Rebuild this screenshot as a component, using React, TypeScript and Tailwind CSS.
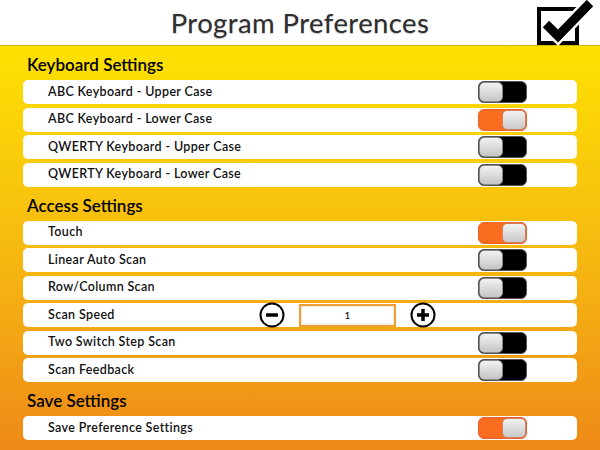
import React from "react";

const font = { fontFamily: '"Lato", "Open Sans", sans-serif' };

function Toggle({ on }: { on: boolean }) {
  return on ? (
    <div className="flex h-[22px] w-[49px] justify-end rounded-[6px] border border-[#e9622a] bg-[#fa6c1e]">
      <div className="h-[20px] w-[24px] rounded-[5px] border border-[#d08060] bg-gradient-to-b from-[#f2f2f2] to-[#c9c9c9]" />
    </div>
  ) : (
    <div className="flex h-[22px] w-[49px] justify-start rounded-[6px] border-[1.5px] border-[#555] bg-black">
      <div className="h-full w-[24px] rounded-[5px] border border-[#888] bg-gradient-to-b from-[#f2f2f2] to-[#c5c5c5]" />
    </div>
  );
}

function RoundBtn({ plus }: { plus?: boolean }) {
  return (
    <svg width="26" height="26" viewBox="0 0 26 26">
      <circle cx="13" cy="13" r="11.5" fill="white" stroke="black" strokeWidth="2" />
      <path d="M7 13 H19" stroke="black" strokeWidth="3.5" />
      {plus && <path d="M13 7 V19" stroke="black" strokeWidth="3.5" />}
    </svg>
  );
}

function Row({ label, on }: { label: string; on?: boolean }) {
  return (
    <div className="flex h-[24px] items-center justify-between rounded-[5px] bg-white pl-[25px] pr-[50px]">
      <span className="text-[12.5px] font-semibold tracking-[0.35px] text-[#111]">{label}</span>
      <Toggle on={!!on} />
    </div>
  );
}

function Heading({ title }: { title: string }) {
  return (
    <div className="flex h-[34px] items-end px-[4px] pb-[5px]">
      <h2 className="text-[17px] leading-[20px] font-semibold text-black">{title}</h2>
    </div>
  );
}

export default function App() {
  return (
    <div className="flex h-[450px] w-[600px] flex-col overflow-hidden" style={font}>
      <header className="relative flex h-[46px] items-center justify-center border-b border-[#d6b300] bg-white">
        <h1 className="text-[27.5px] font-normal tracking-[0.4px] text-[#2e2e2e] [text-shadow:0_1px_1px_rgba(0,0,0,0.25)]">
          Program Preferences
        </h1>
        <svg className="absolute left-[535px] top-0" width="60" height="46" viewBox="0 0 60 46">
          <rect x="4" y="9" width="38" height="34" fill="white" stroke="black" strokeWidth="4" />
          <path d="M11 24 L23 36 L55 3" fill="none" stroke="white" strokeWidth="14" />
          <path d="M11 24 L23 36 L55 3" fill="none" stroke="black" strokeWidth="9" />
        </svg>
      </header>
      <main className="flex-1 bg-gradient-to-b from-[#fde100] via-[#f6ba10] to-[#ee8917] px-[23px]">
        <Heading title="Keyboard Settings" />
        <div className="flex flex-col gap-[3.5px]">
          <Row label="ABC Keyboard - Upper Case" />
          <Row label="ABC Keyboard - Lower Case" on />
          <Row label="QWERTY Keyboard - Upper Case" />
          <Row label="QWERTY Keyboard - Lower Case" />
        </div>
        <Heading title="Access Settings" />
        <div className="flex flex-col gap-[3.5px]">
          <Row label="Touch" on />
          <Row label="Linear Auto Scan" />
          <Row label="Row/Column Scan" />
          <div className="flex h-[24px] items-center rounded-[5px] bg-white pl-[25px]">
            <span className="w-[211px] text-[12.5px] font-semibold tracking-[0.35px] text-[#111]">Scan Speed</span>
            <RoundBtn />
            <div className="mx-[14px] flex h-[23px] w-[97px] items-center justify-center border-2 border-[#f0a030] bg-white text-[10px] text-black shadow-[inset_0_0_2px_rgba(200,120,0,0.5)]">
              1
            </div>
            <RoundBtn plus />
          </div>
          <Row label="Two Switch Step Scan" />
          <Row label="Scan Feedback" />
        </div>
        <Heading title="Save Settings" />
        <Row label="Save Preference Settings" on />
      </main>
    </div>
  );
}
